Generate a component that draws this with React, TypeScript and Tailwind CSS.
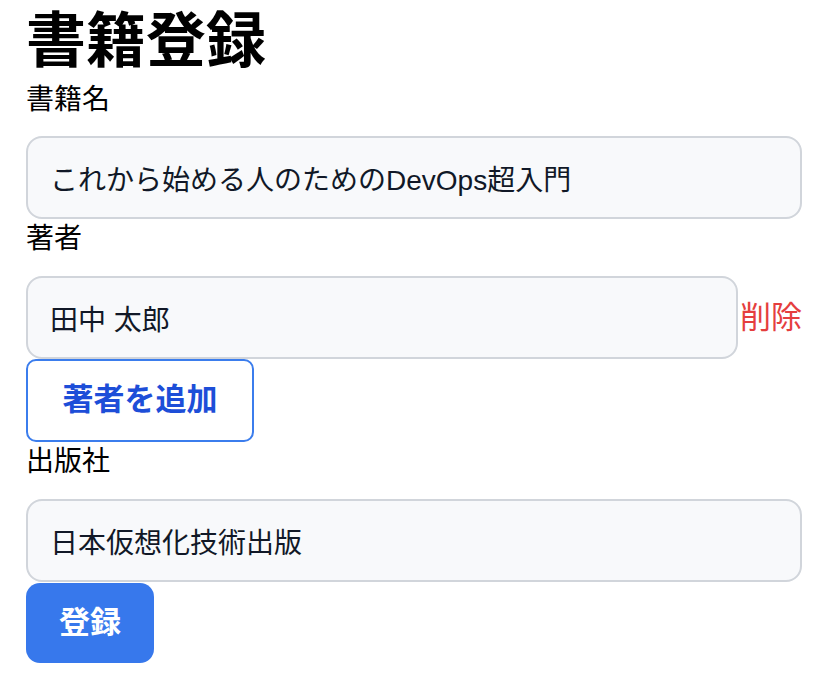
import { useState } from "react"

export default function App() {
  const [title, setTitle] = useState("これから始める人のためのDevOps超入門")
  const [authors, setAuthors] = useState(["田中 太郎"])
  const [publisher, setPublisher] = useState("日本仮想化技術出版")

  return (
    <div className="pl-[26px] pr-[16px] text-black font-['Liberation_Sans','Noto_Sans_CJK_JP',sans-serif]">
      <h1 className="h-[80px] text-[60px] font-bold leading-[84px]">書籍登録</h1>

      {/* 書籍名 */}
      <label className="block h-[40px] text-[28px] leading-[40px]">書籍名</label>
      <input
        className="mt-[16px] block h-[83px] w-full rounded-[16px] border-2 border-[#d1d5db] bg-[#f8f9fb] px-[22px] text-[28px] text-[#111827] outline-none"
        value={title}
        onChange={(e) => setTitle(e.target.value)}
      />

      {/* 著者 */}
      <label className="block h-[40px] text-[28px] leading-[40px]">著者</label>
      {authors.map((a, i) => (
        <div key={i} className="mt-[17px] flex items-center">
          <input
            className="block h-[83px] flex-1 rounded-[16px] border-2 border-[#d1d5db] bg-[#f8f9fb] px-[22px] text-[28px] text-[#111827] outline-none"
            value={a}
            onChange={(e) => setAuthors(authors.map((x, j) => (j === i ? e.target.value : x)))}
          />
          <button
            className="ml-[2px] text-[31px] leading-none text-[#e53e3e]"
            onClick={() => setAuthors(authors.filter((_, j) => j !== i))}
          >
            削除
          </button>
        </div>
      ))}
      <button
        className="block h-[83px] w-[228px] rounded-[10px] border-2 border-[#3b7ded] bg-white text-[31px] font-bold text-[#1d4ed8]"
        onClick={() => setAuthors([...authors, ""])}
      >
        著者を追加
      </button>

      {/* 出版社 */}
      <label className="block h-[40px] text-[28px] leading-[40px]">出版社</label>
      <input
        className="mt-[17px] block h-[83px] w-full rounded-[16px] border-2 border-[#d1d5db] bg-[#f8f9fb] px-[22px] text-[28px] text-[#111827] outline-none"
        value={publisher}
        onChange={(e) => setPublisher(e.target.value)}
      />
      <button className="mt-[1px] block h-[80px] w-[128px] rounded-[14px] bg-[#3778ec] text-[31px] font-bold text-white">
        登録
      </button>
    </div>
  )
}
